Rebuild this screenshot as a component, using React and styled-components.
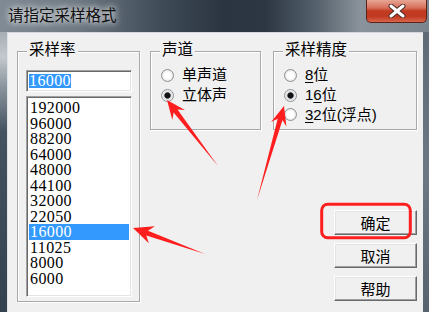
import React from "react";
import styled, { createGlobalStyle } from "styled-components";

const GlobalStyle = createGlobalStyle`
  html, body {
    margin: 0;
    padding: 0;
    background: #f0f0f0;
  }
`;

const UI_FONT = `"Liberation Sans", "Noto Sans CJK SC", sans-serif`;
const NUM_FONT = `"Liberation Serif", "Noto Sans CJK SC", serif`;

// Window chrome
const Window = styled.div`
  position: relative;
  width: 429px;
  height: 312px;
  overflow: hidden;
  display: flex;
  flex-direction: column;
  font-family: ${UI_FONT};
  font-size: 15px;
  color: #000;
`;

const TitleBar = styled.div`
  height: 32px;
  display: flex;
  align-items: flex-start;
  background: linear-gradient(
    to right,
    #7f8a94 0%,
    #6d7882 18%,
    #3e4a56 38%,
    #2a3541 52%,
    #2c3743 62%,
    #56626d 74%,
    #8a939b 84%,
    #7a848e 100%
  );
`;

const Title = styled.div`
  padding-left: 8px;
  line-height: 32px;
  font-size: 15.5px;
  color: #111;
  text-shadow: 0 0 6px rgba(255, 255, 255, 0.95), 0 0 10px rgba(255, 255, 255, 0.7);
`;

const CloseButton = styled.div`
  margin-left: auto;
  margin-right: 2px;
  width: 61px;
  height: 23px;
  box-sizing: border-box;
  border: 1px solid #5a2218;
  border-top: none;
  border-radius: 0 0 5px 5px;
  display: flex;
  align-items: center;
  justify-content: center;
  background: linear-gradient(
    to bottom,
    #e7a595 0%,
    #d8705c 35%,
    #c23a20 50%,
    #c13a22 75%,
    #d9664c 100%
  );
`;

const Body = styled.div`
  flex: 1;
  display: flex;
`;

const FrameLeft = styled.div`
  width: 7px;
  background: linear-gradient(
    to bottom,
    #a7aeb5 0px,
    #c3c8cd 25px,
    #8a949d 55px,
    #44525f 100px,
    #34414e 100%
  );
`;

const FrameRight = styled.div`
  width: 6px;
  background: linear-gradient(to bottom, #5f6b76 0%, #6c7884 50%, #56626e 100%);
`;

const Client = styled.div`
  flex: 1;
  display: flex;
  align-items: flex-start;
  background: #f0f0f0;
  border-left: 1px solid #dde2e6;
  border-top: 1px solid #d2d8dd;
  padding: 18px 0 0 9px;
`;

// Group boxes
const GroupBox = styled.div`
  position: relative;
  box-sizing: border-box;
  width: ${(p) => p.$w}px;
  height: ${(p) => p.$h}px;
  margin-left: ${(p) => p.$ml || 0}px;
  border: 1px solid #a9a9a9;
  box-shadow: 1px 1px 0 #fff, inset 1px 1px 0 #fff;
  padding: ${(p) => p.$pad};
  display: flex;
  flex-direction: column;
`;

const GroupLabel = styled.span`
  position: absolute;
  top: -11px;
  left: 9px;
  padding: 0 2px;
  line-height: 18px;
  font-size: 15.5px;
  background: #f0f0f0;
`;

const Sunken = `
  box-sizing: border-box;
  background: #fff;
  border-style: solid;
  border-width: 1px;
  border-color: #a0a0a0 #fff #fff #a0a0a0;
  box-shadow: inset 1px 1px 0 #696969, inset -1px -1px 0 #e3e3e3;
`;

const EditBox = styled.div`
  ${Sunken}
  width: 106px;
  height: 22px;
  display: flex;
  align-items: center;
  padding-left: 2px;
`;

const Selected = styled.span`
  font-family: ${NUM_FONT};
  font-size: 16px;
  letter-spacing: 0.4px;
  line-height: 14px;
  background: #3399ff;
  color: #fff;
`;

const ListBox = styled.div`
  ${Sunken}
  width: 106px;
  height: 201px;
  margin-top: 4px;
  padding: 3px 2px 0 2px;
`;

const ListItem = styled.div`
  height: 15.5px;
  line-height: 15.5px;
  padding-left: 1px;
  font-family: ${NUM_FONT};
  font-size: 16px;
  letter-spacing: 0.4px;
  background: ${(p) => (p.$active ? "#3399ff" : "transparent")};
  color: ${(p) => (p.$active ? "#fff" : "#000")};
`;

// Radio buttons
const RadioRow = styled.div`
  display: flex;
  align-items: center;
  height: ${(p) => p.$h || 20}px;
  gap: 8px;
`;

const RadioDot = styled.span`
  box-sizing: border-box;
  width: 13px;
  height: 13px;
  flex: none;
  border-radius: 50%;
  border: 1px solid #8e9193;
  background: ${(p) =>
    p.$checked
      ? "radial-gradient(circle, #111 0 2.4px, #4a5158 2.9px, #d6d9dc 3.6px, #f4f5f6 5.5px)"
      : "radial-gradient(circle, #fff 0 3px, #f2f2f2 4.5px, #e2e3e4 5.5px)"};
`;

const RadioText = styled.span`
  line-height: 18px;
  u {
    text-decoration-thickness: 1px;
    text-underline-offset: 2px;
  }
`;

// Right column and buttons
const RightColumn = styled.div`
  margin-left: 12px;
  display: flex;
  flex-direction: column;
  align-items: flex-end;
`;

const ButtonStack = styled.div`
  margin-top: 80px;
  display: flex;
  flex-direction: column;
  gap: 8px;
`;

const Button = styled.div`
  box-sizing: border-box;
  width: 83px;
  height: 25px;
  display: flex;
  align-items: center;
  justify-content: center;
  background: #f0f0f0;
  border-style: solid;
  border-width: 1px;
  border-color: #fff #696969 #696969 #fff;
  box-shadow: inset -1px -1px 0 #a0a0a0, inset 1px 1px 0 #e3e3e3;
  font-size: 15px;
`;

// Annotation overlay
const Overlay = styled.svg`
  position: absolute;
  left: 0;
  top: 0;
  pointer-events: none;
`;

function arrowPoints(tx, ty, hx, hy, w = 5, L = 19, N = 14, hw = 8) {
  const len = Math.hypot(hx - tx, hy - ty);
  const ux = (hx - tx) / len;
  const uy = (hy - ty) / len;
  const nx = -uy;
  const ny = ux;
  const bx = hx - ux * L;
  const by = hy - uy * L;
  const ix = hx - ux * N;
  const iy = hy - uy * N;
  const pts = [
    [tx, ty],
    [ix + (nx * w) / 2, iy + (ny * w) / 2],
    [bx + nx * hw, by + ny * hw],
    [hx, hy],
    [bx - nx * hw, by - ny * hw],
    [ix - (nx * w) / 2, iy - (ny * w) / 2],
  ];
  return pts.map((p) => p.map((v) => v.toFixed(1)).join(",")).join(" ");
}

const rates = [
  "192000",
  "96000",
  "88200",
  "64000",
  "48000",
  "44100",
  "32000",
  "22050",
  "16000",
  "11025",
  "8000",
  "6000",
];

export default function App() {
  return (
    <>
      <GlobalStyle />
      <Window>
        <TitleBar>
          <Title>请指定采样格式</Title>
          <CloseButton>
            <svg width="18" height="14" viewBox="-9 -7 18 14">
              <path d="M-6 -5 L6 5 M6 -5 L-6 5" stroke="#4a2a24" strokeWidth="5" strokeLinecap="round" />
              <path d="M-6 -5 L6 5 M6 -5 L-6 5" stroke="#fff" strokeWidth="3" strokeLinecap="round" />
            </svg>
          </CloseButton>
        </TitleBar>
        <Body>
          <FrameLeft />
          <Client>
            <GroupBox $w={123} $h={251} $pad="18px 7px 4px 8px">
              <GroupLabel>采样率</GroupLabel>
              <EditBox>
                <Selected>16000</Selected>
              </EditBox>
              <ListBox>
                {rates.map((r, i) => (
                  <ListItem key={r} $active={i === 8}>
                    {r}
                  </ListItem>
                ))}
              </ListBox>
            </GroupBox>

            <GroupBox $w={111} $h={79} $ml={10} $pad="13px 0 0 10px">
              <GroupLabel>声道</GroupLabel>
              <RadioRow>
                <RadioDot />
                <RadioText>单声道</RadioText>
              </RadioRow>
              <RadioRow>
                <RadioDot $checked />
                <RadioText>立体声</RadioText>
              </RadioRow>
            </GroupBox>

            <RightColumn>
              <GroupBox $w={144} $h={79} $pad="13px 0 0 10px">
                <GroupLabel>采样精度</GroupLabel>
                <RadioRow>
                  <RadioDot />
                  <RadioText>
                    <u>8</u>位
                  </RadioText>
                </RadioRow>
                <RadioRow>
                  <RadioDot $checked />
                  <RadioText>
                    1<u>6</u>位
                  </RadioText>
                </RadioRow>
                <RadioRow $h={19.5}>
                  <RadioDot />
                  <RadioText>
                    <u>3</u>2位(浮点)
                  </RadioText>
                </RadioRow>
              </GroupBox>
              <ButtonStack>
                <Button>确定</Button>
                <Button>取消</Button>
                <Button>帮助</Button>
              </ButtonStack>
            </RightColumn>
          </Client>
          <FrameRight />
        </Body>

        <Overlay width="429" height="312" viewBox="0 0 429 312">
          <polygon points={arrowPoints(218, 166, 167, 100)} fill="#ff1e1e" />
          <polygon points={arrowPoints(257, 200, 284, 106)} fill="#ff1e1e" />
          <polygon points={arrowPoints(205, 254, 133, 228, 5, 20, 15, 9)} fill="#ff1e1e" />
          <rect
            x="321.7"
            y="204.3"
            width="88.6"
            height="33.4"
            rx="6"
            fill="none"
            stroke="#ff1e1e"
            strokeWidth="3"
          />
        </Overlay>
      </Window>
    </>
  );
}
